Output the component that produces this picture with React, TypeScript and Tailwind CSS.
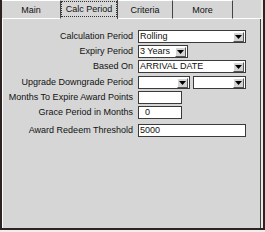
const tabs = ["Main", "Calc Period", "Criteria", "More"];
const tabWidths = ["w-[59px]", "w-[57px]", "w-[55px]", "w-[60px]"];

function Arrow() {
  return (
    <span className="ml-auto mr-[1px] flex h-[10px] w-[11px] items-center justify-center border border-t-white border-l-white border-r-[#555] border-b-[#555] bg-[#d4d4d4]">
      <svg width="7" height="4" viewBox="0 0 7 4">
        <path d="M0 0h7L3.5 4z" fill="#000" />
      </svg>
    </span>
  );
}

function Select({ value, width }: { value: string; width: string }) {
  return (
    <div className={`flex h-[13px] ${width} items-center border border-[#3a3a3a] bg-white pl-[1px]`}>
      <span className="leading-none">{value}</span>
      <Arrow />
    </div>
  );
}

function Field({ value, width, pad = "pl-[1px]" }: { value: string; width: string; pad?: string }) {
  return (
    <div className={`flex h-[13px] ${width} items-center border border-[#3a3a3a] bg-white ${pad}`}>
      <span className="leading-none">{value}</span>
    </div>
  );
}

function Row({ label, mt, children }: { label: string; mt: string; children: React.ReactNode }) {
  return (
    <div className={`flex items-center ${mt}`}>
      <span className="w-[131px] pr-[1px] text-right leading-none">{label}</span>
      <div className="ml-[4px] flex gap-[3px]">{children}</div>
    </div>
  );
}

export default function App() {
  return (
    <div className="h-[232px] w-[265px] bg-[#f3eeec] font-['Liberation_Sans',Arial,sans-serif] text-[9px] text-[#111]">
      <div className="flex h-[230px] flex-col border-x-2 border-b-2 border-[#2d2321] bg-[#d6d6d6]">
        <div className="flex h-[19px] shrink-0">
          {tabs.map((t, i) =>
            i === 1 ? (
              <div key={t} className={`${tabWidths[i]} flex items-stretch border-r border-[#444] pt-[1px] pb-[2px]`}>
                <div className="flex flex-1 items-center justify-center border border-dotted border-[#333] pt-[1px]">
                  {t}
                </div>
              </div>
            ) : (
              <div
                key={t}
                className={`${tabWidths[i]} flex items-center justify-center border-t border-white border-r border-r-[#444] border-b border-b-white pt-[2px]`}
              >
                {t}
              </div>
            )
          )}
          <div className="flex-1 border-b border-white border-r-2 border-r-[#ece8e6]" />
        </div>
        <div className="flex flex-1 flex-col border-r-2 border-[#ece8e6]">
          <div className="flex flex-1 flex-col border-l border-white border-r border-r-[#444] pt-[11px]">
            <Row label="Calculation Period" mt="mt-0">
              <Select value="Rolling" width="w-[108px]" />
            </Row>
            <Row label="Expiry Period" mt="mt-[2px]">
              <Select value="3 Years" width="w-[50px]" />
            </Row>
            <Row label="Based On" mt="mt-[2px]">
              <Select value="ARRIVAL DATE" width="w-[108px]" />
            </Row>
            <Row label="Upgrade Downgrade Period" mt="mt-[3px]">
              <Select value="" width="w-[52px]" />
              <Select value="" width="w-[53px]" />
            </Row>
            <Row label="Months To Expire Award Points" mt="mt-[2px]">
              <Field value="" width="w-[44px]" />
            </Row>
            <Row label="Grace Period in Months" mt="mt-[2px]">
              <Field value="0" width="w-[44px]" pad="pl-[6px]" />
            </Row>
            <Row label="Award Redeem Threshold" mt="mt-[5px]">
              <Field value="5000" width="w-[108px]" />
            </Row>
          </div>
        </div>
      </div>
    </div>
  );
}
